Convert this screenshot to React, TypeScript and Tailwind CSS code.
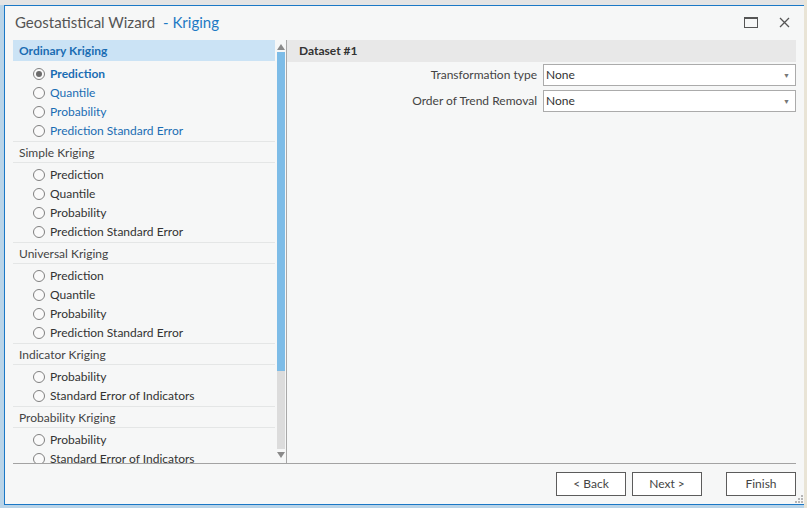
import React from "react";

type Group = { title: string; items: string[]; active?: boolean };

const groups: Group[] = [
  {
    title: "Ordinary Kriging",
    items: ["Prediction", "Quantile", "Probability", "Prediction Standard Error"],
    active: true,
  },
  { title: "Simple Kriging", items: ["Prediction", "Quantile", "Probability", "Prediction Standard Error"] },
  { title: "Universal Kriging", items: ["Prediction", "Quantile", "Probability", "Prediction Standard Error"] },
  { title: "Indicator Kriging", items: ["Probability", "Standard Error of Indicators"] },
  { title: "Probability Kriging", items: ["Probability", "Standard Error of Indicators"] },
];

function Radio({ checked }: { checked?: boolean }) {
  return (
    <span className="w-[12px] h-[12px] rounded-full border border-[#808080] bg-[#fafafa] flex items-center justify-center shrink-0">
      {checked && <span className="w-[6px] h-[6px] rounded-full bg-[#6b6b6b]" />}
    </span>
  );
}

function MethodGroup({ group }: { group: Group }) {
  return (
    <div className="border-b border-[#e4e6e6]">
      <div
        className={
          group.active
            ? "h-[21px] flex items-center pl-[6px] pt-[1px] bg-[#cbe3f5] text-[#1a6db3] font-bold"
            : "h-[21px] flex items-center pl-[6px] pt-[1px] text-[#444] border-b border-[#e4e6e6]"
        }
      >
        {group.title}
      </div>
      <div className={group.active ? "pt-[3px] pb-[1px]" : "pt-[2px] pb-[1px]"}>
        {group.items.map((item, i) => {
          const selected = group.active && i === 0;
          return (
            <div key={item} className="h-[19px] flex items-center gap-[5px] pl-[20px]">
              <Radio checked={selected} />
              <span
                className={
                  group.active
                    ? selected
                      ? "text-[#1a6db3] font-bold"
                      : "text-[#1a6db3]"
                    : "text-[#333]"
                }
              >
                {item}
              </span>
            </div>
          );
        })}
      </div>
    </div>
  );
}

function Select({ label }: { label: string }) {
  return (
    <div className="flex items-center h-[22px]">
      <div className="w-[256px] text-right pr-[6px] text-[#444]">{label}</div>
      <div className="flex-1 h-[22px] bg-white border border-[#ababab] flex items-center justify-between pl-[2px] pr-[5px] text-[#333]">
        <span>None</span>
        <span className="text-[7px] text-[#777]">▼</span>
      </div>
    </div>
  );
}

function Button({ label }: { label: string }) {
  return (
    <button className="w-[70px] h-[24px] border border-[#5c5c5c] bg-white text-[#444] flex items-center justify-center">
      {label}
    </button>
  );
}

export default function App() {
  return (
    <div
      className="w-[807px] h-[508px] bg-[#b9d4e8] relative overflow-hidden text-[12px]"
      style={{ fontFamily: 'Lato, "Noto Sans", sans-serif' }}
    >
      <div className="h-[5px] bg-[#e4e4e4]" />
      <div className="absolute right-0 top-0 w-[3px] h-full bg-[#e9e4d6]" />
      <div className="ml-[4px] w-[801px] h-[500px] border border-[#1b78c6] bg-[#f6f7f7] flex flex-col">
        {/* title bar */}
        <div className="h-[34px] flex items-center pl-[10px] pr-[14px] pb-[1px]">
          <div className="text-[15px] text-[#555] flex-1">
            Geostatistical Wizard <span className="text-[#1d7ac4] ml-[4px]">- Kriging</span>
          </div>
          <svg width="14" height="11" viewBox="0 0 14 11" className="mr-[21px]">
            <rect x="0.5" y="0.5" width="13" height="10" fill="none" stroke="#555" />
            <line x1="0" y1="1.5" x2="14" y2="1.5" stroke="#555" />
          </svg>
          <svg width="11" height="11" viewBox="0 0 11 11">
            <path d="M1 1 L10 10 M10 1 L1 10" stroke="#555" strokeWidth="1.3" />
          </svg>
        </div>

        {/* body */}
        <div className="mx-[8px] flex h-[424px] border-b border-[#a3a3a3]">
          <div className="w-[262px] overflow-hidden">
            {groups.map((g) => (
              <MethodGroup key={g.title} group={g} />
            ))}
          </div>
          <div className="w-[9px] ml-[1px] flex flex-col items-center pt-[4px] pb-[5px]">
            <span className="w-0 h-0 border-l-[4px] border-r-[4px] border-b-[6px] border-l-transparent border-r-transparent border-b-[#8a8a8a]" />
            <div className="w-[8px] flex-1 mt-[2px] flex flex-col">
              <div className="h-[319px] bg-[#7dbce7]" />
              <div className="flex-1 bg-[#dcdcdc]" />
            </div>
            <span className="mt-[3px] w-0 h-0 border-l-[4px] border-r-[4px] border-t-[6px] border-l-transparent border-r-transparent border-t-[#8a8a8a]" />
          </div>
          <div className="w-px bg-[#a8a8a8] ml-[1px]" />
          <div className="flex-1 flex flex-col">
            <div className="h-[22px] bg-[#e8e8e8] flex items-center pl-[12px] font-bold text-[#333]">Dataset #1</div>
            <div className="mt-[2px] flex flex-col gap-[4px]">
              <Select label="Transformation type" />
              <Select label="Order of Trend Removal" />
            </div>
          </div>
        </div>

        {/* footer */}
        <div className="flex-1 relative flex items-start justify-end pr-[8px] pt-[8px]">
          <div className="flex gap-[6px]">
            <Button label="< Back" />
            <Button label="Next >" />
          </div>
          <div className="ml-[24px]">
            <Button label="Finish" />
          </div>
          <div className="absolute right-[1px] bottom-[1px] grid grid-cols-3 gap-[1px]">
            {[0, 1, 2, 3, 4, 5, 6, 7, 8].map((i) => (
              <span
                key={i}
                className={i === 0 || i === 1 || i === 3 ? "w-[2px] h-[2px]" : "w-[2px] h-[2px] bg-[#b5b5b5]"}
              />
            ))}
          </div>
        </div>
      </div>
    </div>
  );
}
